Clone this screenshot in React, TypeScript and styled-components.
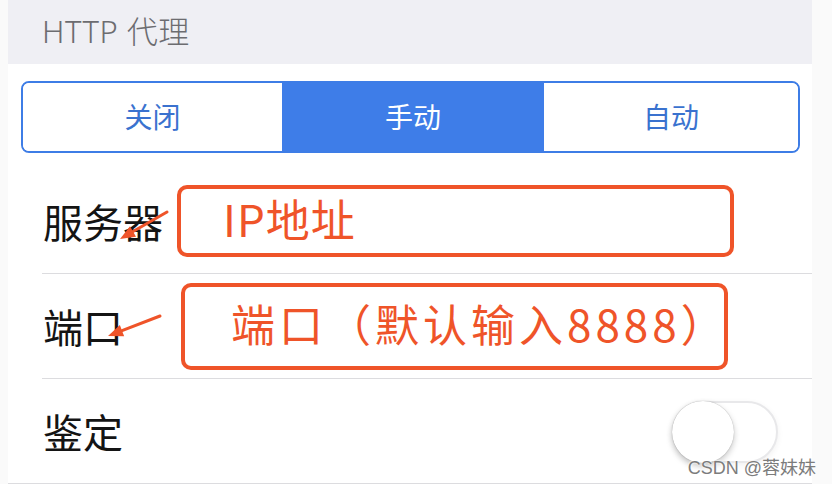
import styled, { createGlobalStyle } from 'styled-components'

const Global = createGlobalStyle`
  html, body {
    margin: 0;
    padding: 0;
    background: #fafafa;
    font-family: "Noto Sans", "Noto Sans CJK SC", sans-serif;
  }
`

const Page = styled.div`
  position: relative;
  width: 832px;
  height: 484px;
  padding: 0 20px 0 8px;
  box-sizing: border-box;
  background: #fafafa;
  overflow: hidden;
`

const Panel = styled.div`
  background: #fff;
  height: 100%;
`

const Header = styled.div`
  height: 64px;
  background: #efeff4;
  padding-left: 34px;
  display: flex;
  align-items: center;
  padding-bottom: 6px;
  box-sizing: border-box;
  font-size: 31px;
  font-weight: 300;
  color: #6c6c70;
  letter-spacing: 0.5px;
`

const SegmentWrap = styled.div`
  padding: 17px 12px 0 13px;
`

const Segmented = styled.div`
  display: grid;
  grid-template-columns: 259px 262px 1fr;
  height: 72px;
  border: 2px solid #3e7de6;
  border-radius: 8px;
  overflow: hidden;
  box-sizing: border-box;
`

const Segment = styled.div<{ $active?: boolean }>`
  display: flex;
  align-items: center;
  justify-content: center;
  font-size: 28px;
  color: ${p => (p.$active ? '#fff' : '#3a72cf')};
  background: ${p => (p.$active ? '#3e7de8' : '#fff')};
  padding-bottom: 2px;
`

const List = styled.div`
  margin-top: 16px;
  border-bottom: 1px solid #dcdcdf;
`

const Row = styled.div`
  position: relative;
  height: 105px;
  margin-left: 34px;
  display: flex;
  align-items: center;
  border-bottom: 1px solid #dcdcdf;
  box-sizing: border-box;

  &:last-child {
    border-bottom: none;
    height: 104px;
  }
`

const Label = styled.div`
  width: 134px;
  padding-left: 1px;
  font-family: "Noto Sans CJK SC", sans-serif;
  font-size: 40px;
  color: #141414;
  flex: none;
`

const Note = styled.div<{ $w: number; $h: number; $pad: number; $shift: number; $ls: number }>`
  width: ${p => p.$w}px;
  height: ${p => p.$h}px;
  margin-left: ${p => p.$shift}px;
  border: 4px solid #ef5429;
  border-radius: 10px;
  box-sizing: border-box;
  display: flex;
  align-items: center;
  padding-left: ${p => p.$pad}px;
  padding-bottom: 6px;
  font-family: "Noto Sans CJK SC", sans-serif;
  font-size: 44px;
  letter-spacing: ${p => p.$ls}px;
  color: #ef5429;
  white-space: nowrap;
`

const ArrowSvg = styled.svg`
  position: absolute;
  left: 0;
  top: 0;
  overflow: visible;
  pointer-events: none;
`

const Toggle = styled.div`
  margin-left: auto;
  margin-right: 34px;
  margin-top: 2px;
  width: 106px;
  height: 62px;
  border: 2px solid #e8e8ea;
  border-radius: 31px;
  box-sizing: border-box;
  position: relative;
  background: #fff;
  box-shadow: 0 2px 6px rgba(0, 0, 0, 0.06);
`

const Knob = styled.div`
  position: absolute;
  left: -2px;
  top: -2px;
  width: 62px;
  height: 62px;
  border-radius: 50%;
  background: #fff;
  box-shadow: 0 3px 6px rgba(0, 0, 0, 0.22), 0 0 1px rgba(0, 0, 0, 0.35);
`

const Watermark = styled.div`
  position: absolute;
  right: 16px;
  bottom: 5px;
  font-family: "Liberation Sans", "Noto Sans CJK SC", sans-serif;
  font-size: 18px;
  color: #7c7c7c;
  text-shadow: 0 0 2px #fff, 0 0 2px #fff;
`

// arrow from (x1,y1) tail to (x2,y2) head, coords relative to the row
const Arrow = ({ x1, y1, x2, y2 }: { x1: number; y1: number; x2: number; y2: number }) => {
  const a = Math.atan2(y2 - y1, x2 - x1)
  const len = 15
  const wing = 6
  const bx = x2 - len * Math.cos(a)
  const by = y2 - len * Math.sin(a)
  const px = -Math.sin(a) * wing
  const py = Math.cos(a) * wing
  return (
    <ArrowSvg width='1' height='1'>
      <line x1={x1} y1={y1} x2={bx} y2={by} stroke='#ef5429' strokeWidth='3' strokeLinecap='round' />
      <polygon points={`${x2},${y2} ${bx + px},${by + py} ${bx - px},${by - py}`} fill='#ef5429' />
    </ArrowSvg>
  )
}

export default function App() {
  return (
    <>
      <Global />
      <Page>
        <Panel>
          <Header>HTTP 代理</Header>
          <SegmentWrap>
            <Segmented>
              <Segment>关闭</Segment>
              <Segment $active>手动</Segment>
              <Segment>自动</Segment>
            </Segmented>
          </SegmentWrap>
          <List>
            <Row>
              <Label>服务器</Label>
              <Note $w={557} $h={72} $pad={42} $shift={0} $ls={1}>IP地址</Note>
              <Arrow x1={125} y1={43} x2={78} y2={70} />
            </Row>
            <Row>
              <Label>端口</Label>
              <Note $w={547} $h={87} $pad={46} $shift={4} $ls={4}>端口（默认输入8888）</Note>
              <Arrow x1={118} y1={42} x2={66} y2={62} />
            </Row>
            <Row>
              <Label>鉴定</Label>
              <Toggle>
                <Knob />
              </Toggle>
            </Row>
          </List>
        </Panel>
        <Watermark>CSDN @蓉妹妹</Watermark>
      </Page>
    </>
  )
}
